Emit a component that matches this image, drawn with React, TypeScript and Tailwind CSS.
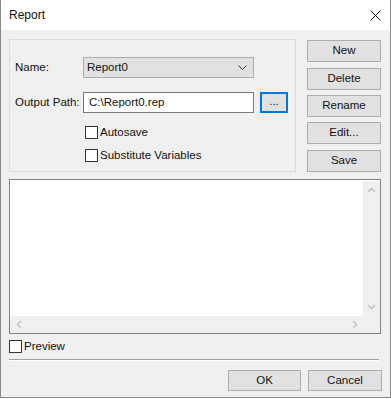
import React from "react";

function Chevron({ dir }: { dir: "up" | "down" | "left" | "right" }) {
  const pts: Record<string, string> = {
    up: "1,5 4.5,1.5 8,5",
    down: "1,1 4.5,4.5 8,1",
    left: "5,1 1.5,4.5 5,8",
    right: "1,1 4.5,4.5 1,8",
  };
  const vertical = dir === "up" || dir === "down";
  return (
    <svg width={vertical ? 9 : 6} height={vertical ? 6 : 9} viewBox={vertical ? "0 0 9 6" : "0 0 6 9"}>
      <polyline points={pts[dir]} fill="none" stroke="#c2c2c2" strokeWidth="1.6" />
    </svg>
  );
}

function Btn({ label, className = "" }: { label: string; className?: string }) {
  return (
    <div className={`h-[22px] w-[74px] bg-[#e1e1e1] border border-[#adadad] flex items-center justify-center ${className}`}>
      {label}
    </div>
  );
}

function Check({ label }: { label: string }) {
  return (
    <div className="flex items-center h-[13px] whitespace-nowrap">
      <div className="w-[13px] h-[13px] shrink-0 bg-white border border-[#333333]" />
      <span className="ml-[2px] leading-none">{label}</span>
    </div>
  );
}

export default function App() {
  return (
    <div className="w-[391px] h-[398px] bg-[#f0f0f0] border border-t-0 border-[#8a8a8a] flex flex-col text-[11.5px] text-[#111] font-['Liberation_Sans',Arial,sans-serif]">
      <div className="h-[30px] bg-white flex items-center justify-between pl-[8px] pr-[9px]">
        <span className="text-[12px] leading-none">Report</span>
        <svg width="11" height="11" viewBox="0 0 11 11">
          <line x1="0.5" y1="0.5" x2="10.5" y2="10.5" stroke="#111" strokeWidth="1" />
          <line x1="10.5" y1="0.5" x2="0.5" y2="10.5" stroke="#111" strokeWidth="1" />
        </svg>
      </div>
      <div className="flex-1 flex flex-col pt-[9px] px-[8px]">
        <div className="flex">
          <div className="w-[287px] h-[133px] shrink-0 border border-[#dcdcdc] pt-[17px] pl-[5px] flex flex-col">
            <div className="flex items-center h-[21px] whitespace-nowrap">
              <span className="w-[68px] shrink-0">Name:</span>
              <div className="w-[171px] h-[21px] shrink-0 bg-[#e1e1e1] border border-[#adadad] pl-[3px] pr-[6px] flex items-center justify-between">
                <span>Report0</span>
                <svg width="9" height="5" viewBox="0 0 9 5">
                  <polyline points="0.5,0.5 4.5,4.5 8.5,0.5" fill="none" stroke="#333" strokeWidth="1" />
                </svg>
              </div>
            </div>
            <div className="flex items-center h-[21px] mt-[14px] whitespace-nowrap">
              <span className="w-[68px] shrink-0">Output Path:</span>
              <div className="w-[171px] h-[21px] shrink-0 bg-white border border-[#7a7a7a] pl-[5px] flex items-center">
                C:\Report0.rep
              </div>
              <div className="ml-[6px] w-[28px] h-[21px] shrink-0 bg-[#e1e1e1] border-2 border-[#0078d7] flex items-center justify-center leading-none pb-[2px]">
                ...
              </div>
            </div>
            <div className="ml-[70px] mt-[13px]">
              <Check label="Autosave" />
            </div>
            <div className="ml-[70px] mt-[10px]">
              <Check label="Substitute Variables" />
            </div>
          </div>
          <div className="ml-[11px] mt-[1px] flex flex-col">
            <Btn label="New" />
            <Btn label="Delete" className="mt-[6px]" />
            <Btn label="Rename" className="mt-[5px]" />
            <Btn label="Edit..." className="mt-[5px]" />
            <Btn label="Save" className="mt-[6px]" />
          </div>
        </div>
        <div className="mt-[7px] w-[372px] h-[155px] border border-[#828282] bg-white flex flex-col pt-[1px]">
          <div className="flex flex-1">
            <div className="flex-1 bg-white" />
            <div className="w-[17px] bg-[#f0f0f0] flex flex-col items-center justify-between pt-[6px] pb-[6px]">
              <Chevron dir="up" />
              <Chevron dir="down" />
            </div>
          </div>
          <div className="h-[17px] bg-[#f0f0f0] flex items-center justify-between pl-[6px] pr-[22px]">
            <Chevron dir="left" />
            <Chevron dir="right" />
          </div>
        </div>
        <div className="mt-[6px]">
          <Check label="Preview" />
        </div>
        <div className="mt-[6px] w-[370px] h-[1px] bg-[#a0a0a0]" />
        <div className="w-[370px] h-[1px] bg-white" />
        <div className="mt-[9px] flex justify-end">
          <div className="h-[21px] w-[73px] bg-[#e1e1e1] border border-[#adadad] flex items-center justify-center">OK</div>
          <div className="ml-[7px] h-[21px] w-[74px] bg-[#e1e1e1] border border-[#adadad] flex items-center justify-center">Cancel</div>
        </div>
      </div>
    </div>
  );
}
